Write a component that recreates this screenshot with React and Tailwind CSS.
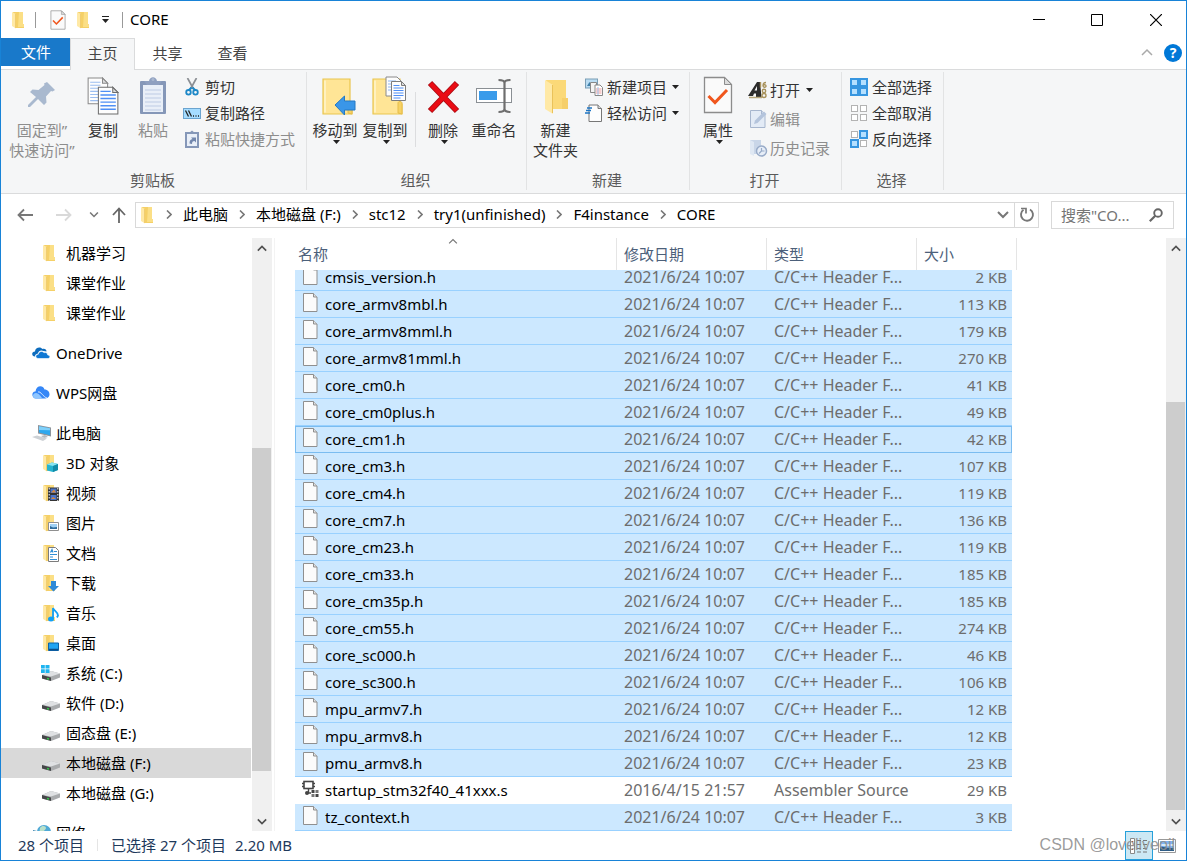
import React, { useState } from 'react';
import clsx from 'clsx';

const HEADER = 'C/C++ Header F...';
const DATE = '2021/6/24 10:07';

const files = [
  { name: 'cmsis_version.h', date: DATE, type: HEADER, size: '2 KB' },
  { name: 'core_armv8mbl.h', date: DATE, type: HEADER, size: '113 KB' },
  { name: 'core_armv8mml.h', date: DATE, type: HEADER, size: '179 KB' },
  { name: 'core_armv81mml.h', date: DATE, type: HEADER, size: '270 KB' },
  { name: 'core_cm0.h', date: DATE, type: HEADER, size: '41 KB' },
  { name: 'core_cm0plus.h', date: DATE, type: HEADER, size: '49 KB' },
  { name: 'core_cm1.h', date: DATE, type: HEADER, size: '42 KB' },
  { name: 'core_cm3.h', date: DATE, type: HEADER, size: '107 KB' },
  { name: 'core_cm4.h', date: DATE, type: HEADER, size: '119 KB' },
  { name: 'core_cm7.h', date: DATE, type: HEADER, size: '136 KB' },
  { name: 'core_cm23.h', date: DATE, type: HEADER, size: '119 KB' },
  { name: 'core_cm33.h', date: DATE, type: HEADER, size: '185 KB' },
  { name: 'core_cm35p.h', date: DATE, type: HEADER, size: '185 KB' },
  { name: 'core_cm55.h', date: DATE, type: HEADER, size: '274 KB' },
  { name: 'core_sc000.h', date: DATE, type: HEADER, size: '46 KB' },
  { name: 'core_sc300.h', date: DATE, type: HEADER, size: '106 KB' },
  { name: 'mpu_armv7.h', date: DATE, type: HEADER, size: '12 KB' },
  { name: 'mpu_armv8.h', date: DATE, type: HEADER, size: '12 KB' },
  { name: 'pmu_armv8.h', date: DATE, type: HEADER, size: '23 KB' },
  { name: 'startup_stm32f40_41xxx.s', date: '2016/4/15 21:57', type: 'Assembler Source', size: '29 KB' },
  { name: 'tz_context.h', date: DATE, type: HEADER, size: '3 KB' },
];

const crumbs = ['此电脑', '本地磁盘 (F:)', 'stc12', 'try1(unfinished)', 'F4instance', 'CORE'];

/* ---------- icons ---------- */

const FolderShape = () => (
  <>
    <path d="M3 1h10v13l1 .5V17H5z" fill="#f5d067" />
    <path d="M9 1h4v12h1v3H8z" fill="#fbdf86" />
    <path d="M2 1l4 2v14.500L2 15z" fill="#ffe9a6" />
    <path d="M5.500 3v14" stroke="#eac25a" strokeWidth=".7" />
  </>
);

const FolderIcon = ({ children }) => (
  <svg className="h-[18px] w-[18px] shrink-0" viewBox="0 0 18 18">
    <FolderShape />
    {children}
  </svg>
);

const CheckDoc = ({ className }) => (
  <svg className={className} viewBox="0 0 30 38">
    <path d="M1.500 1.500h20l7 7v28h-27z" fill="#fafafa" stroke="#8c8c8c" strokeWidth="1.300" />
    <path d="M21.500 1.500v7h7z" fill="#dcdcdc" stroke="#8c8c8c" />
    <path d="M5.500 20l6.500 6.500L24 14" fill="none" stroke="#f0561d" strokeWidth="3" />
  </svg>
);

const PinIcon = () => (
  <svg className="h-10 w-8" viewBox="0 0 32 40">
    <path d="M21 6l8 8-2.500 1.500-1.500-.5-5 5.500.5 6-2.500 2.500-6-6-8 8H2v-2l8-8-6-5 2.500-2.500 6 .5 6-5-.5-1.500z" fill="#a9b9cf" />
  </svg>
);

const CopyPages = () => (
  <>
    <path d="M1 2h14l5 5v20H1z" fill="#fdfdfd" stroke="#8a8a8a" />
    <path d="M15 2v5h5z" fill="#ddd" stroke="#8a8a8a" />
    <path d="M3 6h10M3 9h10M3 12h8M3 15h8M3 18h8M3 21h8M3 24h8" stroke="#9bbdf0" />
    <path d="M11 11h14l5 5v21H11z" fill="#fdfdfd" stroke="#6d6d6d" />
    <path d="M25 11v5h5z" fill="#ddd" stroke="#6d6d6d" />
    <path d="M13 15h10M13 18.500h15M13 22h15M13 25.500h15M13 29h15M13 32.500h15" stroke="#4f8ff5" strokeWidth="1.400" />
  </>
);

const CopyIcon = () => (
  <svg className="h-10 w-8" viewBox="0 0 31 39"><CopyPages /></svg>
);

const PasteIcon = () => (
  <svg className="h-10 w-8" viewBox="0 0 32 40">
    <rect x="3" y="5" width="26" height="33" rx="1" fill="#8597b8" />
    <path d="M6 9h20v27H6z" fill="#e9eff8" />
    <path d="M8 14h16M8 18h16M8 22h16M8 26h16M8 30h16M8 34h16" stroke="#cbd7ea" strokeWidth="1.500" />
    <path d="M7 5h5c1-5 7-5 8 0h5l-3 4H10z" fill="#8fa0c0" />
    <circle cx="16" cy="3.500" r="1.500" fill="#aab8d0" />
  </svg>
);

const CutIcon = () => (
  <svg className="h-[18px] w-[18px]" viewBox="0 0 18 18">
    <path d="M4.500 0l6 11M13.500 0l-6 11" stroke="#8b8f94" strokeWidth="1.700" />
    <path d="M8.500 9.500l-3 3M9.500 9.500l3 3" stroke="#1e88c7" strokeWidth="2" />
    <circle cx="5.500" cy="14.300" r="2.300" fill="none" stroke="#1e88c7" strokeWidth="1.800" />
    <circle cx="12.500" cy="14.300" r="2.300" fill="none" stroke="#1e88c7" strokeWidth="1.800" />
  </svg>
);

const CopyPathIcon = () => (
  <svg className="h-[18px] w-[18px]" viewBox="0 0 18 18">
    <rect x=".5" y="4.500" width="17" height="10" fill="#a5dcff" stroke="#6ba4cf" />
    <path d="M2.500 6.500l3 6M5.500 6.500l3 6" stroke="#222" strokeWidth="1.300" />
    <path d="M10 12h1M12.500 12h1M15 12h1" stroke="#222" strokeWidth="1.300" />
  </svg>
);

const PasteShortcutIcon = () => (
  <svg className="h-[18px] w-[18px]" viewBox="0 0 18 18">
    <path d="M3 3h12v14H3z" fill="#e9eff8" stroke="#8597b8" strokeWidth="2" />
    <path d="M5.500 3.500L9 .5l3.500 3z" fill="#8597b8" />
    <path d="M6.500 13.500c0-3 1-4 3-4.500L8 7.500h5v5l-1.500-1.500c-2 0-2.500 1-2.500 3z" fill="#7287ad" />
  </svg>
);

const BigFolder = () => (
  <>
    <path d="M2 3h27v24l2 1v10H2z" fill="#ffe596" stroke="#eac54f" strokeWidth="1.200" />
    <path d="M4 4.500v32" stroke="#fff4cc" strokeWidth="1.500" />
    <path d="M27 37V27c0-2 4-2 4 0v11z" fill="#f7d264" stroke="#e6bd4b" />
  </>
);

const MoveToIcon = () => (
  <svg className="h-10 w-9" viewBox="0 0 36 40">
    <BigFolder />
    <path d="M14 29l9.500-9v5H34v9H23.500v5z" fill="#3a96e8" stroke="#2479c4" />
  </svg>
);

const CopyToIcon = () => (
  <svg className="h-10 w-9" viewBox="0 0 36 40">
    <BigFolder />
    <path d="M15 1h11l4 4v15H15z" fill="#fdfdfd" stroke="#8a8a8a" />
    <path d="M17 5h8M17 8h4M17 11h4M17 14h4" stroke="#8fb6f0" />
    <path d="M20.500 5.500h10l4 4v15h-14z" fill="#fdfdfd" stroke="#7d7d7d" />
    <path d="M30.500 5.500v4h4z" fill="#ddd" stroke="#7d7d7d" />
    <path d="M22.500 9.500h6M22.500 12h10M22.500 14.500h10M22.500 17h10M22.500 19.500h10M22.500 22h7" stroke="#4f8ff5" />
  </svg>
);

const DeleteIcon = () => (
  <svg className="h-10 w-9" viewBox="0 0 36 40">
    <path d="M5 7l27 28M32 7L5 35" stroke="#a80d14" strokeWidth="6" />
    <path d="M5.500 7.500l26 27M31.500 7.500l-26 27" stroke="#ea0c14" strokeWidth="4.300" />
  </svg>
);

const RenameIcon = () => (
  <svg className="h-10 w-9" viewBox="0 0 36 40">
    <rect x=".5" y="12.500" width="35" height="14" fill="#fff" stroke="#8a8f94" />
    <rect x="3" y="15" width="18" height="9" fill="#3a9bea" />
    <path d="M28.500 6v29M22.500 4c4 0 6 1 6 3 0-2 2-3 6-3M22.500 36c4 0 6-1 6-3 0 2 2 3 6 3" fill="none" stroke="#6e6e6e" strokeWidth="2.200" />
  </svg>
);

const NewFolderIcon = () => (
  <svg className="h-10 w-7" viewBox="0 0 28 40">
    <path d="M4 4h20v18l2 1v10H8z" fill="#fbd978" />
    <path d="M20 22h6v11h-6z" fill="#f6cf6a" />
    <path d="M3 4l8 5v29l-8-5z" fill="#ffe9a6" />
    <path d="M10.500 9v28" stroke="#eac25a" />
  </svg>
);

const NewItemIcon = () => (
  <svg className="h-[18px] w-[18px]" viewBox="0 0 18 18">
    <rect x=".5" y="1" width="12" height="9" fill="#b9dcf3" stroke="#7a9db5" />
    <path d="M2 8l2.500-4L7 8z" fill="#3f7fa8" />
    <path d="M5.500 4.500h6v10h-6z" fill="#f4f4f4" stroke="#888" />
    <path d="M10 7h5l2.500 2.500V17.500H10z" fill="#fff" stroke="#888" />
    <path d="M11 11h5.500M11 13h5.500M11 15h5.500" stroke="#ef9a9a" />
    <path d="M13 9v8" stroke="#9cc3ee" />
  </svg>
);

const EasyAccessIcon = () => (
  <svg className="h-[18px] w-[18px]" viewBox="0 0 18 18">
    <path d="M4 1h9l3.500 3.500V17.500H4z" fill="#fdfdfd" stroke="#777" />
    <path d="M13 1v3.500h3.500" fill="#ddd" stroke="#777" />
    <path d="M2 4h5M1 6.500h5M0 9h5" stroke="#1b74c4" strokeWidth="1.400" />
  </svg>
);

const OpenIcon = () => (
  <svg className="h-[18px] w-[20px]" viewBox="0 0 20 18">
    <path d="M0 15L9 1h3l1.500 15H8v-3.500H6L5 15z" fill="#2b2b2b" />
    <path d="M9 5v4.500H6.500z" fill="#f5f6f7" />
    <path d="M1 16.500h13" stroke="#b5a477" strokeWidth="1.500" />
    <path d="M12.500 1v5.500M18 1.500c-2 0-3 1-3 3s3 2.500 3 .5-3-1.500-3 0" fill="none" stroke="#a8925c" strokeWidth="1.400" />
    <circle cx="16" cy="10" r="1.700" fill="none" stroke="#a8925c" strokeWidth="1.400" />
    <circle cx="16" cy="14.500" r="2" fill="none" stroke="#a8925c" strokeWidth="1.400" />
  </svg>
);

const EditIcon = () => (
  <svg className="h-[18px] w-[20px]" viewBox="0 0 20 18">
    <path d="M2.500.5h11l3.500 3.500v13.500H2.500z" fill="#e3ebf6" stroke="#a7b6ce" />
    <path d="M13.500.5V4H17" fill="#cfdaea" stroke="#a7b6ce" />
    <path d="M6 14l1-3.500 9-9 2.500 2.500-9 9z" fill="#b4c4dc" />
  </svg>
);

const HistoryIcon = () => (
  <svg className="h-[18px] w-[20px]" viewBox="0 0 20 18">
    <path d="M2 1h11v14H5z" fill="#c9d6e8" />
    <path d="M2 1l4 2v14l-4-2z" fill="#dfe8f3" />
    <circle cx="13.500" cy="12" r="5" fill="#e7eef8" stroke="#98abc8" strokeWidth="1.500" />
    <path d="M13.500 9v3h3M11 14.500l2.500-2.500" fill="none" stroke="#98abc8" strokeWidth="1.200" />
  </svg>
);

const GridIcon = ({ on }) => (
  <svg className="h-[18px] w-[18px]" viewBox="0 0 18 18">
    {[[0, 0], [9, 0], [0, 9], [9, 9]].map(([x, y], i) => (
      <rect
        key={i}
        x={x + (on[i] ? 1 : 1.5)}
        y={y + (on[i] ? 1 : 1.5)}
        width={on[i] ? 7 : 6}
        height={on[i] ? 7 : 6}
        fill={on[i] ? '#b5e0ff' : '#fff'}
        stroke={on[i] ? '#3796e0' : '#b3b3b3'}
        strokeWidth={on[i] ? 2 : 1}
      />
    ))}
  </svg>
);

const OneDriveIcon = () => (
  <svg className="h-[18px] w-[18px] shrink-0" viewBox="0 0 18 18">
    <path d="M3 12.500c-4-.5-3.500-5 0-5 0-4 5.500-5.500 7.500-2.500 2-.8 4 .3 4 2.500l-3-.5c-3-1.500-5.500.5-5.500 2.500-2 .3-3 1.500-3 3z" fill="#0d6cbd" />
    <path d="M6 14.500c-3-.3-3-4 .3-4.300.5-3 4.200-3.500 5.700-1.500 2-.7 3.700.5 3.700 2.300 3 .3 2.800 3.300.3 3.500z" fill="#0f78d4" stroke="#fff" strokeWidth=".6" />
  </svg>
);

const WpsCloudIcon = () => (
  <svg className="h-[18px] w-[18px] shrink-0" viewBox="0 0 18 18">
    <path d="M4 14.500C-1 14-.5 7 3.500 7.500 4 1.500 11 .5 12.500 5.500c6 0 7 8.500 1 9z" fill="#3587f7" />
    <path d="M4 14.500c-4-.5-4-5 0-5.500 3 0 5 4 6.500 5.500z" fill="#8fc6ff" />
    <path d="M6 8c3-1 5 5 9 6" fill="none" stroke="#fff" strokeWidth=".8" />
  </svg>
);

const ComputerIcon = () => (
  <svg className="h-[18px] w-[20px] shrink-0" viewBox="0 0 20 18">
    <path d="M6 1l13 2.500v9L6 9.500z" fill="#8d949b" />
    <path d="M7 2.200l11 2v7L7 8.500z" fill="#2fa8ee" />
    <path d="M7 2.200l11 2v2L7 6z" fill="#7fd0fa" />
    <path d="M9 12l4-1 3 2-4 1z" fill="#b5babf" />
    <path d="M0 13l5-1.500 10 3-4 2.500z" fill="#cdd1d5" />
  </svg>
);

const DriveIcon = ({ system }) => (
  <svg className="h-[18px] w-[20px] shrink-0" viewBox="0 0 20 18">
    <path d="M1 11l9-4 9 2.500v4L10 17l-9-2.500z" fill="#a9abad" />
    <path d="M1 11l9-4 9 2.500-9 3z" fill="#dfe1e3" />
    <path d="M1 11l9 2.500V17l-9-2.500z" fill="#454749" />
    <path d="M6 14.500l2 .5" stroke="#35c84a" strokeWidth="1.500" />
    {system && <path d="M0 1h3.800v3.500H0zM4.500 1H8.500v3.500h-4zM0 5.200h3.800V9H0zM4.500 5.200h4V9h-4z" fill="#1eb4f0" />}
  </svg>
);

const NetworkIcon = () => (
  <svg className="h-[18px] w-[20px] shrink-0" viewBox="0 0 20 18">
    <circle cx="12" cy="8" r="7" fill="#4fa9d6" />
    <path d="M8 4c2-3 6-2 6 0s-3 3-4 5-3 0-2-5z" fill="#b9e0c9" />
    <path d="M1 6l8 2v7l-8-3z" fill="#4088b0" />
  </svg>
);

const FileIcon = () => (
  <svg className="h-[19px] w-[15px] shrink-0" viewBox="0 0 15 19">
    <path d="M.5.5h10L14 4v14.500H.5z" fill="#fbfbfb" stroke="#8f8f8f" />
    <path d="M10.500.5V4H14" fill="#e0e0e0" stroke="#8f8f8f" />
  </svg>
);

const AsmIcon = () => (
  <svg className="h-[18px] w-[17px] shrink-0" viewBox="0 0 17 18">
    <rect x="2" y="1.500" width="9" height="7" fill="#fff" stroke="#444" strokeWidth="1.600" />
    <path d="M0 3.500h2M0 6.500h2M11 3.500h2M11 6.500h2M6.500 9v4H9" fill="none" stroke="#444" strokeWidth="1.400" />
    <circle cx="5" cy="13" r="2" fill="#444" />
    <rect x="9.500" y="10" width="3" height="3" fill="#444" />
    <rect x="13.500" y="10" width="3" height="3" fill="#777" />
    <rect x="9.500" y="14" width="3" height="3" fill="#777" />
    <rect x="13.500" y="14" width="3" height="3" fill="#444" />
  </svg>
);

const Chevron = ({ dir, className, weight = 2 }) => {
  const paths = { up: 'M1 7l5-5 5 5', down: 'M1 2l5 5 5-5' };
  return (
    <svg className={className} viewBox="0 0 12 9">
      <path d={paths[dir]} fill="none" stroke="currentColor" strokeWidth={weight} />
    </svg>
  );
};

const Caret = () => (
  <svg className="h-1 w-[7px]" viewBox="0 0 7 4"><path d="M0 0h7L3.500 4z" fill="#222" /></svg>
);

const tree = [
  { label: '机器学习', icon: <FolderIcon />, level: 2 },
  { label: '课堂作业', icon: <FolderIcon />, level: 2 },
  { label: '课堂作业', icon: <FolderIcon />, level: 2 },
  { label: 'OneDrive', icon: <OneDriveIcon />, level: 1 },
  { label: 'WPS网盘', icon: <WpsCloudIcon />, level: 1 },
  { label: '此电脑', icon: <ComputerIcon />, level: 1 },
  {
    label: '3D 对象',
    level: 2,
    icon: (
      <FolderIcon>
        <path d="M6 10.500l5-2 6 1.500v6l-5 2-6-1.500z" fill="#25b3cf" />
        <path d="M6 10.500l5-2 6 1.500-5 2z" fill="#8be4f0" />
        <path d="M12 12l5-2v6l-5 2z" fill="#128ba8" />
      </FolderIcon>
    ),
  },
  {
    label: '视频',
    level: 2,
    icon: (
      <FolderIcon>
        <path d="M7 3.500h11V17H7z" fill="#333" />
        <path d="M9.500 4.500h6V9h-6zM9.500 11h6v5h-6z" fill="#4a74c9" />
        <path d="M10 8.500l3-3 2 3zM10 15l2-2 3 2z" fill="#d98a3d" />
        <path d="M8.200 4v13M16.800 4v13" stroke="#fff" strokeDasharray="1.500 1.500" />
      </FolderIcon>
    ),
  },
  {
    label: '图片',
    level: 2,
    icon: (
      <FolderIcon>
        <path d="M7.500 8.500h10v8h-10z" fill="#fff" stroke="#8f8f8f" />
        <path d="M9 10h7v5H9z" fill="#9fd0f4" />
        <path d="M9 15v-3l3 1.500 4-.5v2z" fill="#2f6c9c" />
      </FolderIcon>
    ),
  },
  {
    label: '文档',
    level: 2,
    icon: (
      <FolderIcon>
        <path d="M7.500 3.500h7l3 3v11h-10z" fill="#fff" stroke="#7c7c7c" />
        <path d="M9 10.500h7M9 13h3M9 15.500h7M13 7.500h3M9.500 8.500l1.500-3 1 3" fill="none" stroke="#2f8fd6" strokeWidth="1.200" />
      </FolderIcon>
    ),
  },
  {
    label: '下载',
    level: 2,
    icon: (
      <FolderIcon>
        <path d="M10 7h5v5h3l-5.500 5.500L7 12h3z" fill="#2e8ad8" />
      </FolderIcon>
    ),
  },
  {
    label: '音乐',
    level: 2,
    icon: (
      <FolderIcon>
        <ellipse cx="10" cy="15" rx="3" ry="2.500" fill="#12a0f5" />
        <path d="M12 15V4c1 3 5 4 5 7.500l-1 2" fill="none" stroke="#12a0f5" strokeWidth="1.800" />
      </FolderIcon>
    ),
  },
  {
    label: '桌面',
    level: 2,
    icon: (
      <FolderIcon>
        <path d="M7.500 9h10v7.500h-10z" fill="#22a4f2" stroke="#0d62a8" />
        <path d="M8 15.500h9" stroke="#0d4f88" strokeWidth="1.500" />
      </FolderIcon>
    ),
  },
  { label: '系统 (C:)', icon: <DriveIcon system />, level: 2 },
  { label: '软件 (D:)', icon: <DriveIcon />, level: 2 },
  { label: '固态盘 (E:)', icon: <DriveIcon />, level: 2 },
  { label: '本地磁盘 (F:)', icon: <DriveIcon />, level: 2, current: true },
  { label: '本地磁盘 (G:)', icon: <DriveIcon />, level: 2 },
  { label: '网络', icon: <NetworkIcon />, level: 1, cut: true },
];

/* ---------- pieces ---------- */

const BigButton = ({ icon, lines, caret, disabled, className }) => (
  <button
    type="button"
    disabled={disabled}
    className={clsx('flex flex-col items-center pt-1', disabled ? 'text-[#8d8d8d]' : 'text-[#333]', className)}
  >
    <span className="flex h-11 items-start justify-center">{icon}</span>
    {lines.map((line) => (
      <span key={line} className="leading-5 whitespace-nowrap">{line}</span>
    ))}
    {caret && <span className="pl-[3px]"><Caret /></span>}
  </button>
);

const SmallButton = ({ icon, label, caret, disabled, tall }) => (
  <button
    type="button"
    disabled={disabled}
    className={clsx(
      'flex items-center whitespace-nowrap',
      tall ? 'h-[29px] gap-[2px]' : 'h-[26px] gap-1',
      disabled ? 'text-[#8d8d8d]' : 'text-[#333]'
    )}
  >
    {icon}
    <span>{label}</span>
    {caret && <span className={tall ? 'pl-1' : 'pl-px'}><Caret /></span>}
  </button>
);

const Group = ({ label, className, children }) => (
  <section className={clsx('flex shrink-0 flex-col border-r border-[#e2e3e4]', className)}>
    <div className="flex h-[98px] items-start">{children}</div>
    <h2 className="pr-[2px] text-center leading-5 text-[#5a5a5a]">{label}</h2>
  </section>
);

const Scrollbar = ({ before, thumb, after }) => (
  <div className="flex w-5 shrink-0 flex-col bg-[#f0f0f0] text-[#505050]">
    <button type="button" aria-label="向上滚动" className="flex h-5 items-center justify-center">
      <Chevron dir="up" className="h-[9px] w-[10px]" />
    </button>
    <div style={{ flexGrow: before }} />
    <div className="mr-px bg-[#cdcdcd]" style={{ flexGrow: thumb }} />
    <div style={{ flexGrow: after }} />
    <button type="button" aria-label="向下滚动" className="flex h-5 items-center justify-center">
      <Chevron dir="down" className="h-[9px] w-[10px]" />
    </button>
  </div>
);

const TitleBar = () => (
  <header className="flex h-[37px] items-center pl-[9px]">
    <FolderIcon />
    <span className="ml-[7px] h-4 w-px bg-[#999]" />
    <button type="button" aria-label="属性" className="ml-[14px]"><CheckDoc className="h-5 w-4" /></button>
    <button type="button" aria-label="新建文件夹" className="ml-[9px]"><FolderIcon /></button>
    <button type="button" aria-label="自定义快速访问工具栏" className="ml-[9px]">
      <svg className="h-2 w-[7px]" viewBox="0 0 7 8"><path d="M0 .5h7" stroke="#222" /><path d="M0 3h7L3.500 7z" fill="#222" /></svg>
    </button>
    <span className="ml-[13px] h-4 w-px bg-[#999]" />
    <h1 className="ml-[7px] pb-px text-black">CORE</h1>
    <div className="ml-auto flex">
      <button type="button" aria-label="最小化" className="flex w-[58px] justify-center">
        <svg className="h-3 w-3" viewBox="0 0 12 12"><path d="M0 5.500h12" stroke="#000" /></svg>
      </button>
      <button type="button" aria-label="最大化" className="flex w-[58px] justify-center">
        <svg className="h-3 w-3" viewBox="0 0 12 12"><path d="M.5.5h11v11H.5z" fill="none" stroke="#000" /></svg>
      </button>
      <button type="button" aria-label="关闭" className="flex w-[60px] justify-center">
        <svg className="h-3 w-3" viewBox="0 0 12 12"><path d="M0 0l12 12M12 0L0 12" stroke="#000" strokeWidth="1.200" /></svg>
      </button>
    </div>
  </header>
);

const Tabs = () => {
  const [active, setActive] = useState('主页');

  return (
    <nav className="flex h-8 border-b border-[#dadbdc]">
      <button type="button" className="h-7 w-[70px] bg-[#1979ca] text-white">文件</button>
      <div className="-ml-px flex">
        {['主页', '共享', '查看'].map((tab) => (
          <button
            key={tab}
            type="button"
            onClick={() => setActive(tab)}
            className={clsx(
              'h-8 w-[65px] border-x border-t pb-1 text-[#444]',
              active === tab ? 'border-[#dadbdc] bg-[#f5f6f7]' : 'border-transparent'
            )}
          >
            {tab}
          </button>
        ))}
      </div>
      <div className="ml-auto flex items-center gap-[11px] pr-1 pb-[2px]">
        <button type="button" aria-label="最小化功能区" className="text-[#aaa]">
          <Chevron dir="up" className="h-[9px] w-3" weight={1.5} />
        </button>
        <button
          type="button"
          aria-label="帮助"
          className="flex h-[18px] w-[18px] items-center justify-center rounded-full bg-[#0078d7] text-sm leading-none font-bold text-white"
        >
          ?
        </button>
      </div>
    </nav>
  );
};

const Ribbon = () => (
  <div className="flex overflow-hidden border-b border-[#dadbdc] bg-[#f5f6f7] pt-[2px] pb-[3px]">
    <Group label="剪贴板" className="w-[306px]">
      <BigButton icon={<PinIcon />} lines={['固定到”', '快速访问”']} disabled className="ml-[3px] w-[76px]" />
      <BigButton icon={<CopyIcon />} lines={['复制']} className="w-[46px]" />
      <BigButton icon={<PasteIcon />} lines={['粘贴']} disabled className="w-[54px]" />
      <div className="pt-[2px] pl-[3px]">
        <SmallButton icon={<CutIcon />} label="剪切" />
        <SmallButton icon={<CopyPathIcon />} label="复制路径" />
        <SmallButton icon={<PasteShortcutIcon />} label="粘贴快捷方式" disabled />
      </div>
    </Group>
    <Group label="组织" className="w-[220px]">
      <BigButton icon={<span className="pl-2"><MoveToIcon /></span>} lines={['移动到']} caret className="ml-[3px] w-[50px]" />
      <BigButton icon={<span className="pl-2"><CopyToIcon /></span>} lines={['复制到']} caret className="w-[50px]" />
      <span className="mt-5 ml-[5px] h-[55px] w-px bg-[#dcdddf]" />
      <BigButton icon={<DeleteIcon />} lines={['删除']} caret className="ml-[2px] w-[50px]" />
      <BigButton icon={<RenameIcon />} lines={['重命名']} className="w-[52px]" />
    </Group>
    <Group label="新建" className="w-[163px]">
      <BigButton icon={<NewFolderIcon />} lines={['新建', '文件夹']} className="w-[57px]" />
      <div className="pt-[2px] pl-px">
        <SmallButton icon={<NewItemIcon />} label="新建项目" caret />
        <SmallButton icon={<EasyAccessIcon />} label="轻松访问" caret />
      </div>
    </Group>
    <Group label="打开" className="w-[152px]">
      <BigButton icon={<CheckDoc className="h-[38px] w-[30px]" />} lines={['属性']} caret className="ml-[3px] w-[50px]" />
      <div className="pt-[3px] pl-[5px]">
        <SmallButton icon={<OpenIcon />} label="打开" caret tall />
        <SmallButton icon={<EditIcon />} label="编辑" disabled tall />
        <SmallButton icon={<HistoryIcon />} label="历史记录" disabled tall />
      </div>
    </Group>
    <Group label="选择" className="w-[102px]">
      <div className="pt-[2px] pl-2">
        <SmallButton icon={<GridIcon on={[true, true, true, true]} />} label="全部选择" />
        <SmallButton icon={<GridIcon on={[false, false, false, false]} />} label="全部取消" />
        <SmallButton icon={<GridIcon on={[false, true, true, false]} />} label="反向选择" />
      </div>
    </Group>
  </div>
);

const AddressBar = () => (
  <div className="flex h-11 items-center pr-3 pb-[3px] pl-4">
    <button type="button" aria-label="返回" className="text-[#777]">
      <svg className="h-4 w-4" viewBox="0 0 16 16"><path d="M16 8H2M7 2.500L1.500 8 7 13.500" fill="none" stroke="currentColor" strokeWidth="1.800" /></svg>
    </button>
    <button type="button" aria-label="前进" className="ml-[23px] text-[#d9d9d9]">
      <svg className="h-4 w-4" viewBox="0 0 16 16"><path d="M0 8h14M9 2.500L14.500 8 9 13.500" fill="none" stroke="currentColor" strokeWidth="1.800" /></svg>
    </button>
    <button type="button" aria-label="最近位置" className="ml-[17px] text-[#777]">
      <Chevron dir="down" className="h-[7px] w-[10px]" />
    </button>
    <button type="button" aria-label="上移" className="ml-[13px] text-[#666]">
      <svg className="h-4 w-[14px]" viewBox="0 0 14 16"><path d="M7 16V2M1 8l6-6.500L13 8" fill="none" stroke="currentColor" strokeWidth="1.800" /></svg>
    </button>
    <div className="ml-[9px] flex h-[26px] min-w-0 flex-1 items-center border border-[#d9d9d9] text-black">
      <span className="ml-[3px]"><FolderIcon /></span>
      <ol className="ml-[9px] flex items-center gap-[11px] pb-px">
        {crumbs.map((crumb) => (
          <li key={crumb} className="flex items-center gap-[11px] whitespace-nowrap">
            <svg className="h-[9px] w-[6px]" viewBox="0 0 6 9"><path d="M1 .5l4 4-4 4" fill="none" stroke="#777" strokeWidth="1.600" /></svg>
            <a href="#">{crumb}</a>
          </li>
        ))}
      </ol>
      <button type="button" aria-label="以前的位置" className="mr-[5px] ml-auto text-[#777]">
        <Chevron dir="down" className="h-[9px] w-3" />
      </button>
      <button type="button" aria-label="刷新" className="flex h-full w-6 items-center justify-center border-l border-[#d9d9d9]">
        <svg className="h-4 w-4" viewBox="0 0 16 16">
          <path d="M11 2.500a6 6 0 1 1-6.500.3" fill="none" stroke="#777" strokeWidth="1.900" />
          <path d="M2 1.500h5v5" fill="none" stroke="#777" strokeWidth="1.700" />
        </svg>
      </button>
    </div>
    <label className="ml-3 flex h-7 w-[123px] items-center border border-[#d9d9d9] pr-[10px] pl-[9px]">
      <input
        type="search"
        aria-label="搜索"
        placeholder='搜索"CO...'
        className="w-full min-w-0 outline-none placeholder:text-[#757575]"
      />
      <svg className="h-[14px] w-[14px] shrink-0" viewBox="0 0 14 14">
        <circle cx="9" cy="5" r="3.800" fill="none" stroke="#666" strokeWidth="1.900" />
        <path d="M6.300 7.700L.8 13.200" stroke="#666" strokeWidth="2.200" />
      </svg>
    </label>
  </div>
);

const Sidebar = () => (
  <nav className="w-[250px] shrink-0 text-black">
    {tree.map((item, i) => (
      <a
        key={i}
        href="#"
        className={clsx(
          'flex overflow-hidden leading-[30px]',
          item.cut ? 'h-[13px]' : 'h-[30px]',
          item.level === 1 ? 'mt-[10px] gap-1 pl-[31px]' : 'gap-[5px] pl-[40px]',
          item.current && 'bg-[#d9d9d9]'
        )}
      >
        <span className="flex h-[30px] w-5 shrink-0 items-center">{item.icon}</span>
        <span>{item.label}</span>
      </a>
    ))}
  </nav>
);

const FileTable = () => {
  const [focused, setFocused] = useState('core_cm1.h');

  return (
    <table className="w-[722px] table-fixed border-separate border-spacing-0">
      <colgroup>
        <col className="w-[322px]" />
        <col className="w-[150px]" />
        <col className="w-[150px]" />
        <col className="w-[95px]" />
        <col className="w-[5px]" />
      </colgroup>
      <thead>
        <tr className="h-8 text-left text-[#4c607a]">
          <th className="relative border-r border-[#e5e5e5] pl-[3px] font-normal">
            名称
            <Chevron dir="up" weight={1.5} className="absolute top-0 left-[153px] h-[7px] w-[10px] text-[#777]" />
          </th>
          <th className="border-r border-[#e5e5e5] pl-[7px] font-normal">修改日期</th>
          <th className="border-r border-[#e5e5e5] pl-[7px] font-normal">类型</th>
          <th className="pl-[7px] font-normal">大小</th>
          <td className="border-r border-[#e5e5e5]" />
        </tr>
      </thead>
      <tbody>
        {files.map((file, i) => {
          const selected = file.name.endsWith('.h');
          const isFocused = file.name === focused;
          const cell = clsx(
            'border-b p-0 whitespace-nowrap',
            selected ? 'bg-[#cce8ff]' : '',
            isFocused ? 'border-t border-[#7abcf0]' : selected ? 'border-[#99d1ff]' : 'border-transparent'
          );
          // the first row is partly scrolled under the header
          const height = i === 0 ? 'h-5' : isFocused ? 'h-[25px]' : 'h-[26px]';
          return (
            <tr key={file.name} onClick={() => setFocused(file.name)} className="text-[#6d6d6d]">
              <td className={clsx(cell, isFocused && 'border-l')}>
                <div className={clsx('flex items-end overflow-hidden', height)}>
                  <div
                    className={clsx(
                      'flex h-[26px] shrink-0 items-center text-black',
                      selected ? 'gap-[7px]' : 'gap-[6px]',
                      selected && !isFocused ? 'pl-2' : 'pl-[7px]'
                    )}
                  >
                    <span className="pb-[3px]">{selected ? <FileIcon /> : <AsmIcon />}</span>
                    <span>{file.name}</span>
                  </div>
                </div>
              </td>
              {[file.date, file.type].map((text) => (
                <td key={text} className={cell}>
                  <div className={clsx('flex items-end pl-[7px]', height)}>
                    <span className="text-base leading-[26px]">{text}</span>
                  </div>
                </td>
              ))}
              <td className={clsx(cell, isFocused && 'border-r')}>
                <div className={clsx('flex items-end justify-end', height, isFocused ? 'pr-1' : 'pr-[5px]')}>
                  <span className="leading-[26px]">{file.size}</span>
                </div>
              </td>
              <td />
            </tr>
          );
        })}
      </tbody>
    </table>
  );
};

const StatusBar = () => (
  <footer className="relative flex h-[29px] items-center pl-[17px] whitespace-nowrap text-[#1e395b]">
    <div className="flex items-center pb-[2px]">
      <span>28 个项目</span>
      <span className="mx-[13px] h-3 w-px bg-[#e5e5e5]" />
      <span>已选择 27 个项目</span>
      <span className="ml-[9px]">2.20 MB</span>
    </div>
    <div className="ml-auto flex h-full items-center gap-[5px] pr-[10px]">
      <button type="button" aria-label="详细信息" className="flex h-full w-7 items-center justify-center border border-[#26a0da] bg-[#cce8f4]">
        <svg className="h-4 w-[18px]" viewBox="0 0 18 16">
          <path d="M.5.5h4v15h-4z" fill="#fff" stroke="#888" />
          <path d="M2.500 3v1M2.500 7v1M2.500 11v1" stroke="#b3452c" strokeWidth="1.500" />
          <path d="M7 2.500h4M13 2.500h4M7 6.500h4M13 6.500h4M7 10.500h4M13 10.500h4M7 14h4M13 14h4" stroke="#777" />
        </svg>
      </button>
      <button type="button" aria-label="大图标" className="flex h-full items-center">
        <svg className="h-[14px] w-[18px]" viewBox="0 0 18 14">
          <path d="M.5.5h17v13H.5z" fill="#fff" stroke="#999" />
          <path d="M2 2h14v10H2z" fill="#7db4f0" />
          <path d="M2 12V8c3-1 5 1 14 1v3z" fill="#2f5d86" />
          <path d="M2 6h14" stroke="#d4e9fb" strokeWidth="2" />
        </svg>
      </button>
    </div>
    <span className="pointer-events-none absolute top-1 right-[11px] font-['Liberation_Sans'] text-base leading-5 text-[#8f8f8f]/90">
      CSDN @loveliveoil
    </span>
  </footer>
);

export default function App() {
  return (
    <div
      lang="zh-CN"
      className="flex min-h-screen flex-col overflow-hidden border border-[#1883d7] bg-white font-['Noto_Sans','Noto_Sans_CJK_SC',sans-serif] text-[15px] leading-5"
    >
      <TitleBar />
      <Tabs />
      <Ribbon />
      <AddressBar />
      <main className="flex flex-1">
        <Sidebar />
        <div className="ml-px flex"><Scrollbar before={190} thumb={323} after={40} /></div>
        <div className="ml-[2px] w-px bg-[#f3f3f3]" />
        <div className="min-w-0 flex-1 pl-5"><FileTable /></div>
        <Scrollbar before={144} thumb={408} after={1} />
      </main>
      <StatusBar />
    </div>
  );
}
